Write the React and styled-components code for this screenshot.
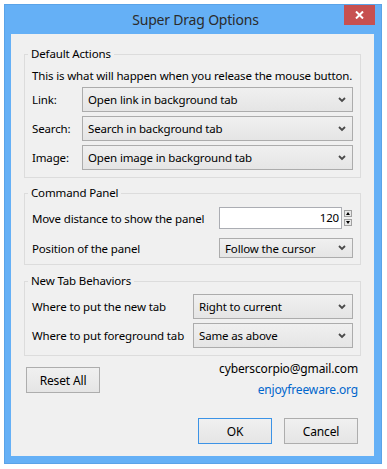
import React from "react";
import styled, { createGlobalStyle } from "styled-components";

const GlobalStyle = createGlobalStyle`
  html, body { margin: 0; padding: 0; background: #ffffff; }
  body {
    font-family: "Noto Sans", "Open Sans", sans-serif;
    font-size: 11.5px;
    letter-spacing: -0.15px;
    color: #000;
  }
`

const Window = styled.div`
  margin: 4px 0 0 4px;
  width: 378px;
  height: 460px;
  box-sizing: border-box;
  background: #65b0f6;
  border: 1px solid #5aa3e8;
  padding: 0 7px 7px 6px;
  display: flex;
  flex-direction: column;
`

const TitleBar = styled.div`
  height: 29px;
  display: grid;
  grid-template-columns: 1fr auto 1fr;
  align-items: center;
`

const Title = styled.div`
  grid-column: 2;
  font-size: 14px;
  letter-spacing: -0.2px;
  color: #2b2b2b;
  margin-left: 6px;
`

const Close = styled.div`
  grid-column: 3;
  justify-self: end;
  align-self: start;
  width: 31px;
  height: 20px;
  margin-right: -1px;
  background: #c75050;
  display: flex;
  align-items: center;
  justify-content: center;
`

const Client = styled.div`
  flex: 1;
  background: #f0f0f0;
  padding: 12px 13px 0 13px;
  display: flex;
  flex-direction: column;
`

const Group = styled.fieldset`
  margin: ${p => p.$top}px 0 0 0;
  padding: 0 7px;
  border: 1px solid #dcdcdc;
  min-width: 0;
`

const Legend = styled.legend`
  padding: 0 3px;
  margin-left: -4px;
  line-height: 16px;
`

const Rows = styled.div`
  display: flex;
  flex-direction: column;
  gap: ${p => p.$gap}px;
  padding: ${p => p.$top}px 0 ${p => p.$bottom}px 0;
`

const Intro = styled.div`
  line-height: 16px;
  margin-bottom: -1px;
  white-space: nowrap;
`

const Row = styled.div`
  display: grid;
  grid-template-columns: ${p => p.$label}px 1fr;
  align-items: center;
`

const Label = styled.div`
  white-space: nowrap;
`

const Combo = styled.div`
  height: ${p => p.$h}px;
  box-sizing: border-box;
  border: 1px solid #acacac;
  background: linear-gradient(#f0f0f0, #e5e5e5);
  display: flex;
  align-items: center;
  justify-content: space-between;
  padding: 0 6px 0 5px;
  white-space: nowrap;
`

const SpinField = styled.div`
  display: flex;
  align-items: center;
`

const NumberBox = styled.div`
  width: 123px;
  height: 22px;
  box-sizing: border-box;
  border: 1px solid #abadb3;
  background: #ffffff;
  text-align: right;
  padding-right: 2px;
  line-height: 20px;
`

const Spinner = styled.div`
  margin-left: 2px;
  display: flex;
  flex-direction: column;
  gap: 2px;
`

const SpinButton = styled.div`
  width: 8px;
  height: 7px;
  box-sizing: border-box;
  border: 1px solid #a0a0a0;
  background: #e8e8e8;
  display: flex;
  align-items: center;
  justify-content: center;
`

const Footer = styled.div`
  height: 42px;
  display: flex;
  justify-content: space-between;
  align-items: flex-start;
`

const Button = styled.div`
  width: ${p => p.$w || 74}px;
  height: 26px;
  box-sizing: border-box;
  border: 1px solid ${p => (p.$default ? "#3c93e6" : "#adadad")};
  background: linear-gradient(#f0f0f0, #e5e5e5);
  display: flex;
  align-items: center;
  justify-content: center;
  font-size: 12px;
`

const ResetButton = styled(Button)`
  margin: 11px 0 0 2px;
`

const Contact = styled.div`
  margin: 5px 3px 0 0;
  display: flex;
  flex-direction: column;
  align-items: flex-end;
  gap: 5px;
  line-height: 16px;
  font-size: 12px;
`

const SiteLink = styled.a`
  color: #0066cc;
  text-decoration: none;
`

const ButtonRow = styled.div`
  margin-top: 20px;
  padding-right: 3px;
  display: flex;
  justify-content: flex-end;
  gap: 12px;
`

const Chevron = () => (
  <svg width="8" height="6" viewBox="0 0 8 6">
    <path d="M1 1 L4 4 L7 1" fill="none" stroke="#4a4a4a" strokeWidth="1.8" />
  </svg>
)

const Select = ({ h = 25, children }) => (
  <Combo $h={h}>
    <span>{children}</span>
    <Chevron />
  </Combo>
)

const Arrow = ({ up }) => (
  <svg width="4" height="3" viewBox="0 0 4 3">
    <path d={up ? "M0 3 L2 0 L4 3 Z" : "M0 0 L4 0 L2 3 Z"} fill="#000" />
  </svg>
)

export default function App() {
  return (
    <>
      <GlobalStyle />
      <Window>
        <TitleBar>
          <Title>Super Drag Options</Title>
          <Close>
            <svg width="9" height="8" viewBox="0 0 9 8">
              <path d="M1 0.5 L8 7.5 M8 0.5 L1 7.5" stroke="#fff" strokeWidth="2" />
            </svg>
          </Close>
        </TitleBar>
        <Client>
          <Group $top={0}>
            <Legend>Default Actions</Legend>
            <Rows $gap={4} $top={6} $bottom={7}>
              <Intro>This is what will happen when you release the mouse button.</Intro>
              <Row $label={50}>
                <Label>Link:</Label>
                <Select>Open link in background tab</Select>
              </Row>
              <Row $label={50}>
                <Label>Search:</Label>
                <Select>Search in background tab</Select>
              </Row>
              <Row $label={50}>
                <Label>Image:</Label>
                <Select>Open image in background tab</Select>
              </Row>
            </Rows>
          </Group>

          <Group $top={7}>
            <Legend>Command Panel</Legend>
            <Rows $gap={9} $top={6} $bottom={6}>
              <Row $label={187}>
                <Label>Move distance to show the panel</Label>
                <SpinField>
                  <NumberBox>120</NumberBox>
                  <Spinner>
                    <SpinButton><Arrow up /></SpinButton>
                    <SpinButton><Arrow /></SpinButton>
                  </Spinner>
                </SpinField>
              </Row>
              <Row $label={187}>
                <Label>Position of the panel</Label>
                <Select h={20}>Follow the cursor</Select>
              </Row>
            </Rows>
          </Group>

          <Group $top={8}>
            <Legend>New Tab Behaviors</Legend>
            <Rows $gap={4} $top={5} $bottom={7}>
              <Row $label={161}>
                <Label>Where to put the new tab</Label>
                <Select>Right to current</Select>
              </Row>
              <Row $label={161}>
                <Label>Where to put foreground tab</Label>
                <Select>Same as above</Select>
              </Row>
            </Rows>
          </Group>

          <Footer>
            <ResetButton>Reset All</ResetButton>
            <Contact>
              <span>cyberscorpio@gmail.com</span>
              <SiteLink href="#">enjoyfreeware.org</SiteLink>
            </Contact>
          </Footer>

          <ButtonRow>
            <Button $default>OK</Button>
            <Button>Cancel</Button>
          </ButtonRow>
        </Client>
      </Window>
    </>
  )
}
